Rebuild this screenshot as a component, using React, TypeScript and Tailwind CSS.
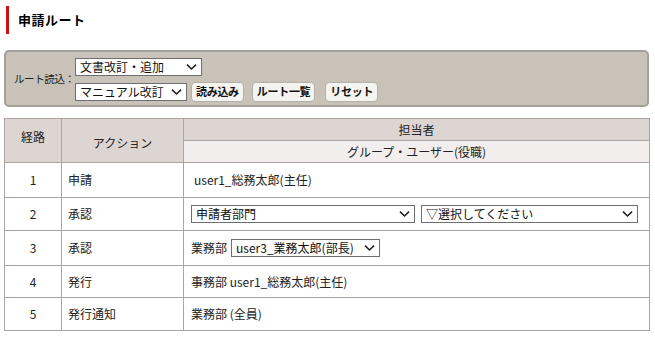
import React from 'react';

const font = { fontFamily: '"Noto Sans CJK JP", "Noto Sans", sans-serif' };

function Chevron() {
    return (
        <svg width="11" height="7" viewBox="0 0 11 7" className="pointer-events-none absolute right-[5px] top-1/2 -translate-y-1/2">
            <path d="M1 1.2 L5.5 5.5 L10 1.2" fill="none" stroke="#222" strokeWidth="1.6" />
        </svg>
    );
}

function Select({ value, width, options }: { value: string; width: string; options?: string[] }) {
    return (
        <div className={`relative inline-block ${width}`}>
            <select
                defaultValue={value}
                className="w-full appearance-none bg-white border border-[#6f6f6f] h-[18px] pl-[4px] pr-[18px] text-[12px] leading-[16px] text-[#111] outline-none"
            >
                {(options ?? [value]).map((o) => (
                    <option key={o}>{o}</option>
                ))}
            </select>
            <Chevron />
        </div>
    );
}

function SmallButton({ children }: { children: React.ReactNode }) {
    return (
        <button
            type="button"
            className="h-[20px] px-[4px] rounded-[4px] border border-[#b4b0aa] bg-[#f6f4f0] text-[11px] font-bold text-[#111] leading-none tracking-[-0.3px]"
        >
            {children}
        </button>
    );
}

const rows = [
    { no: '1', action: '申請', h: 'h-[35px]', cell: <span className="pl-[3px]">user1_総務太郎(主任)</span> },
    {
        no: '2',
        action: '承認',
        h: 'h-[33px]',
        cell: (
            <div className="flex gap-[6px]">
                <Select value="申請者部門" width="w-[224px]" />
                <Select value="▽選択してください" width="w-[217px]" />
            </div>
        ),
    },
    {
        no: '3',
        action: '承認',
        h: 'h-[35px]',
        cell: (
            <div className="flex items-center gap-[4px]">
                <span>業務部</span>
                <Select value="user3_業務太郎(部長)" width="w-[149px]" />
            </div>
        ),
    },
    { no: '4', action: '発行', h: 'h-[32px]', cell: <span>事務部 user1_総務太郎(主任)</span> },
    { no: '5', action: '発行通知', h: 'h-[33px]', cell: <span>業務部 (全員)</span> },
];

export default function App() {
    return (
        <div className="w-[655px] h-[338px] bg-white text-[12px] text-[#222]" style={font}>
            <div className="pt-[6px] pl-[6px] flex items-center h-[34px]">
                <div className="w-[3px] h-[28px] bg-[#cc1111]" />
                <h1 className="ml-[9px] text-[13px] font-bold text-black tracking-[0.5px]">申請ルート</h1>
            </div>

            <div className="mt-[16px] mx-[4px] w-[645px] h-[57px] rounded-[5px] border-2 border-[#a3a09b] bg-[#c8c2b9] flex items-center">
                <span className="ml-[8px] w-[61px] whitespace-nowrap text-[10.5px] tracking-[-0.4px] text-[#222]">ルート読込：</span>
                <div className="flex flex-col gap-[6px] pt-[2px]">
                    <Select value="文書改訂・追加" width="w-[127px]" />
                    <div className="flex items-center">
                        <Select value="マニュアル改訂" width="w-[112px]" />
                        <div className="ml-[4px] flex gap-[8px]">
                            <SmallButton>読み込み</SmallButton>
                            <SmallButton>ルート一覧</SmallButton>
                            <div className="ml-[2px]">
                                <SmallButton>リセット</SmallButton>
                            </div>
                        </div>
                    </div>
                </div>
            </div>

            <table className="mt-[11px] ml-[4px] w-[646px] border-collapse">
                <thead>
                    <tr className="h-[22px]">
                        <th rowSpan={2} className="w-[57px] border border-[#aaa5a3] bg-[#ddd5d2] font-normal text-center align-middle pb-[8px]">
                            経路
                        </th>
                        <th rowSpan={2} className="w-[122px] border border-[#aaa5a3] bg-[#ddd5d2] font-normal text-center align-middle pt-[4px]">
                            アクション
                        </th>
                        <th className="border border-[#aaa5a3] bg-[#ddd5d2] font-normal text-center">担当者</th>
                    </tr>
                    <tr className="h-[22px]">
                        <th className="border border-[#aaa5a3] bg-[#f2eeed] font-normal text-center">グループ・ユーザー(役職)</th>
                    </tr>
                </thead>
                <tbody>
                    {rows.map((r) => (
                        <tr key={r.no} className={r.h}>
                            <td className="border border-[#aaa5a3] text-center">{r.no}</td>
                            <td className="border border-[#aaa5a3] pl-[6px]">{r.action}</td>
                            <td className="border border-[#aaa5a3] pl-[7px]">{r.cell}</td>
                        </tr>
                    ))}
                </tbody>
            </table>
        </div>
    );
}
